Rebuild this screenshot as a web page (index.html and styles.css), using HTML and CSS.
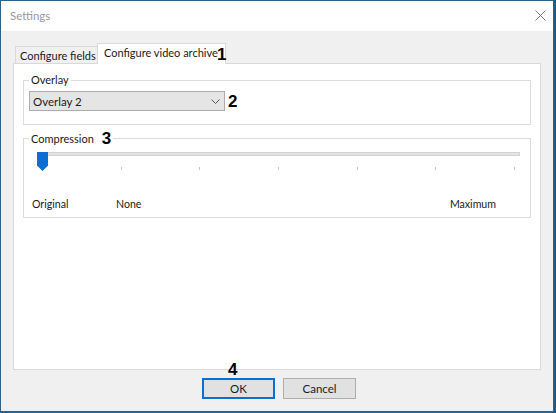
FILE: index.html
```html
<!DOCTYPE html>
<html>
<head>
<meta charset="utf-8">
<link rel="stylesheet" href="styles.css">
</head>
<body>
<div class="window">
  <div class="titlebar">
    <span class="title">Settings</span>
    <svg class="close" width="11" height="11" viewBox="0 0 11 11"><path d="M0.5 0.5L10.5 10.5M10.5 0.5L0.5 10.5" stroke="#7a7a7a" stroke-width="1" fill="none"/></svg>
  </div>
  <div class="content">
    <div class="tabs">
      <div class="tab">Configure fields</div>
      <div class="tab active">Configure video archive<span class="mark mark-1">1</span></div>
    </div>
    <div class="panel">
      <fieldset class="group overlay">
        <legend>Overlay</legend>
        <div class="combo-row">
          <div class="combo">
            <span>Overlay 2</span>
            <svg class="chev" width="9" height="5" viewBox="0 0 9 5"><path d="M0.5 0.5L4.5 4.5L8.5 0.5" stroke="#555" stroke-width="1" fill="none"/></svg>
          </div>
          <span class="mark mark-2">2</span>
        </div>
      </fieldset>
      <fieldset class="group compression">
        <legend>Compression<span class="mark mark-3">3</span></legend>
        <div class="slider">
          <div class="track"></div>
          <svg class="thumb" width="11" height="19" viewBox="0 0 11 19"><path d="M0 0H11V13.5L5.5 19L0 13.5Z" fill="#0a6fd1"/></svg>
          <div class="ticks">
            <span></span><span></span><span></span><span></span><span></span><span></span><span></span>
          </div>
        </div>
        <div class="scale">
          <span class="lbl-original">Original</span>
          <span>None</span>
          <span class="lbl-max">Maximum</span>
        </div>
      </fieldset>
    </div>
    <div class="buttons">
      <button class="btn btn-default">OK<span class="mark mark-4">4</span></button>
      <button class="btn">Cancel</button>
    </div>
  </div>
</div>
</body>
</html>
```
FILE: styles.css
```css
html, body {
  margin: 0;
  padding: 0;
  background: #27587c;
}
body {
  font-family: Lato, "Noto Sans", sans-serif;
  font-size: 10.6px;
  color: #1a1a1a;
}
.window {
  width: 554px;
  height: 413px;
  box-sizing: border-box;
  border: 1px solid #2f6088;
  border-bottom-width: 2px;
  background: #f0f0f0;
  display: flex;
  flex-direction: column;
}
.titlebar {
  height: 30px;
  background: #ffffff;
  display: flex;
  align-items: center;
  padding: 0 7px 0 9px;
  flex: none;
}
.title {
  color: #999999;
  font-size: 11.5px;
  flex: 1;
  margin-top: -1px;
}
.close {
  display: block;
  margin-top: -1px;
}
.content {
  flex: 1;
  padding: 12px 12px 0 12px;
  display: flex;
  flex-direction: column;
}
.tabs {
  display: flex;
  align-items: flex-end;
  height: 20px;
  padding-left: 2px;
  font-size: 11px;
}
.tab {
  width: 83px;
  height: 17px;
  box-sizing: border-box;
  border: 1px solid #d9d9d9;
  border-bottom: none;
  background: #f0f0f0;
  padding: 0 0 0 4px;
  line-height: 17px;
  white-space: nowrap;
}
.tab.active {
  position: relative;
  z-index: 1;
  width: 129px;
  height: 21px;
  margin-bottom: -1px;
  margin-left: -1px;
  background: #ffffff;
  padding: 0 0 0 6px;
  line-height: 17px;
}
.mark {
  font-family: "Liberation Sans", Arial, sans-serif;
  font-weight: bold;
  font-size: 17px;
  color: #000;
  line-height: 17px;
}
.mark-1 {
  position: absolute;
  left: 119px;
  top: 2px;
}
.panel {
  height: 307px;
  box-sizing: border-box;
  border: 1px solid #d9d9d9;
  background: #ffffff;
  padding: 9px 9px 0 9px;
  flex: none;
}
.group {
  margin: 0;
  border: 1px solid #dcdcdc;
  min-width: 0;
}
.group legend {
  padding: 0 2px;
  line-height: 14px;
  margin-left: 0;
  font-size: 11px;
}
.overlay {
  padding: 4px 5px 13px 5px;
}
.combo-row {
  display: flex;
  align-items: center;
}
.combo {
  width: 196px;
  height: 20px;
  box-sizing: border-box;
  border: 1px solid #adadad;
  background: #e5e5e5;
  display: flex;
  align-items: center;
  justify-content: space-between;
  padding: 0 4px 0 3px;
  font-size: 11.5px;
}
.chev {
  display: block;
}
.mark-2 {
  margin-left: 3px;
}
.compression {
  margin-top: 5px;
  padding: 0 0 6px 0;
}
.compression legend {
  padding-left: 2px;
  padding-right: 2px;
  margin-left: 5px;
}
.mark-3 {
  margin-left: 8px;
  vertical-align: -1px;
}
.slider {
  position: relative;
  margin: 5px 10px 0 13px;
  height: 24px;
}
.track {
  margin: 5px 0 0 1px;
  height: 4px;
  box-sizing: border-box;
  border: 1px solid #d2d2d2;
  background: #e4e4e4;
}
.thumb {
  position: absolute;
  left: 0;
  top: 0;
  display: block;
}
.ticks {
  display: flex;
  justify-content: space-between;
  margin: 11px 5px 0 5px;
}
.ticks span {
  width: 1px;
  height: 3px;
  background: #c4c4c4;
}
.scale {
  display: flex;
  margin: 21px 34px 0 8px;
  line-height: 14px;
}
.lbl-original {
  width: 84px;
}
.lbl-max {
  margin-left: auto;
}
.buttons {
  display: flex;
  justify-content: center;
  gap: 8px;
  margin-top: 8px;
  padding-left: 4px;
}
.btn {
  position: relative;
  width: 73px;
  height: 21px;
  box-sizing: border-box;
  border: 1px solid #adadad;
  background: #e1e1e1;
  font-family: inherit;
  font-size: 11.5px;
  color: #1a1a1a;
  padding: 0;
  margin: 0;
  line-height: 18px;
}
.btn-default {
  border: 2px solid #0a6fd1;
}
.mark-4 {
  position: absolute;
  left: 24px;
  top: -19px;
}
```
